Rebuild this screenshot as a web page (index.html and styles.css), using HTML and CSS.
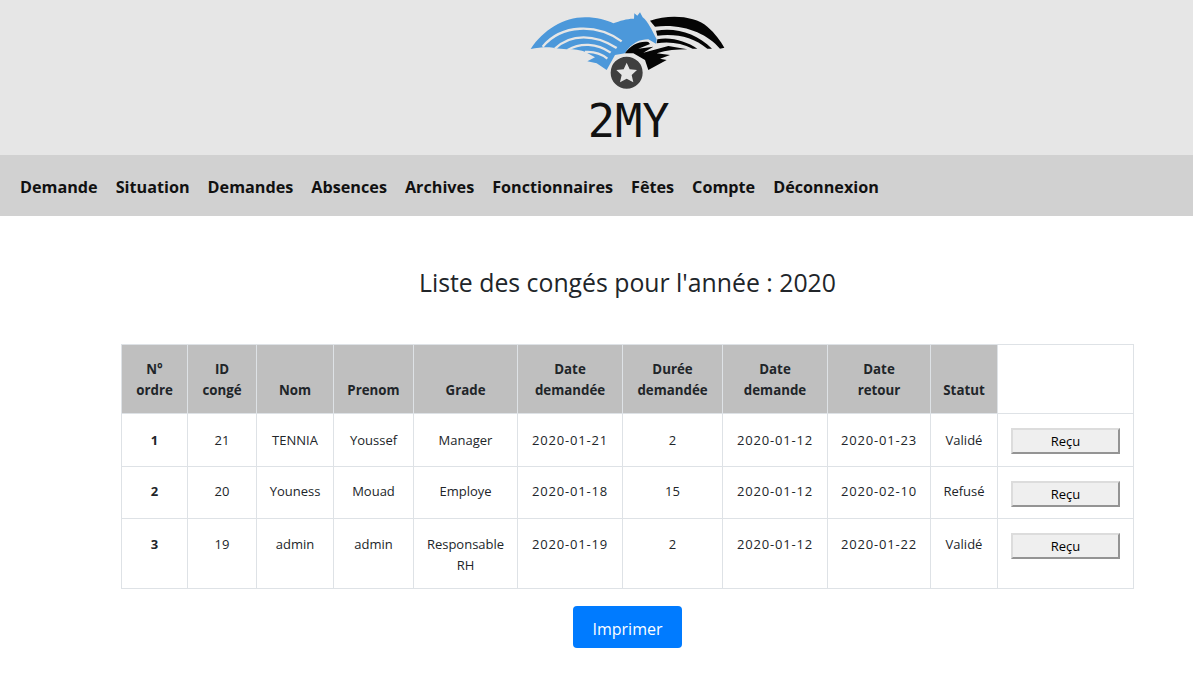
FILE: index.html
```html
<!DOCTYPE html>
<html lang="fr">
<head>
  <meta charset="UTF-8" />
  <meta name="viewport" content="width=device-width, initial-scale=1" />
  <title>Liste des congés</title>
  <link rel="stylesheet" href="styles.css">
</head>
<body>

  <header class="top">
    <svg class="logo" viewBox="0 0 750 450" width="250" height="150" role="img" aria-label="2MY">
      <!-- blue wing -->
      <path class="wing-blue" d="M92 147C130 90 190 52 255 52C290 52 320 60 340 70C360 62 385 55 402 56L403 40L412 47L420 37L428 52C445 65 455 90 470 118L468 131L445 118C420 118 395 128 375 160L345 165L320 210L290 190L262 184L285 172L255 155C230 148 215 148 200 148L165 145C150 140 120 142 92 147Z"/>
      <path class="cut" d="M128 140C185 72 290 70 365 124"/>
      <path class="cut" d="M165 146C212 100 285 102 350 144"/>
      <path class="cut" d="M203 150C240 128 290 128 332 158"/>
      <path class="cut" d="M255 156C280 154 305 162 322 176"/>
      <!-- black wing -->
      <path class="wing-black" d="M450 62C510 42 585 48 622 80C645 100 662 122 673 143L660 146C620 100 550 70 465 80Z"/>
      <path class="wing-black" d="M468 92C530 82 590 100 636 146L622 146C580 112 530 100 472 107Z"/>
      <path class="wing-black" d="M472 118C515 110 560 125 592 146L578 146C545 130 510 124 470 130Z"/>
      <path class="wing-black" d="M375 160C390 135 420 122 445 126L450 132L415 146L460 140L430 158L505 138L562 148C530 148 500 150 470 160L510 165L480 176L500 180L445 210L435 180L400 160Z"/>
      <!-- star badge -->
      <circle class="badge" cx="380" cy="218" r="51"/>
      <polygon class="star" points="380,188 389,208 411,210 395,225 400,247 380,236 360,247 365,225 349,210 371,208"/>
      <text class="logo-text" x="386" y="412">2MY</text>
    </svg>
  </header>

  <nav class="menu">
    <a href="#">Demande</a>
    <a href="#">Situation</a>
    <a href="#">Demandes</a>
    <a href="#">Absences</a>
    <a href="#">Archives</a>
    <a href="#">Fonctionnaires</a>
    <a href="#">Fêtes</a>
    <a href="#">Compte</a>
    <a href="#">Déconnexion</a>
  </nav>

  <main class="content">
    <h1>Liste des congés pour l'année : 2020</h1>

    <table class="conges">
      <colgroup>
        <col class="c-ordre"><col class="c-id"><col class="c-nom"><col class="c-prenom"><col class="c-grade">
        <col class="c-date1"><col class="c-duree"><col class="c-date2"><col class="c-date3"><col class="c-statut"><col class="c-action">
      </colgroup>
      <thead>
        <tr>
          <th>N°<br>ordre</th>
          <th>ID<br>congé</th>
          <th>Nom</th>
          <th>Prenom</th>
          <th>Grade</th>
          <th>Date<br>demandée</th>
          <th>Durée<br>demandée</th>
          <th>Date<br>demande</th>
          <th>Date<br>retour</th>
          <th>Statut</th>
          <td></td>
        </tr>
      </thead>
      <tbody>
        <tr class="r1">
          <td><b>1</b></td><td>21</td><td>TENNIA</td><td>Youssef</td><td>Manager</td>
          <td class="date">2020-01-21</td><td>2</td><td class="date">2020-01-12</td><td class="date">2020-01-23</td><td>Validé</td>
          <td class="action"><button class="recu">Reçu</button></td>
        </tr>
        <tr class="r2">
          <td><b>2</b></td><td>20</td><td>Youness</td><td>Mouad</td><td>Employe</td>
          <td class="date">2020-01-18</td><td>15</td><td class="date">2020-01-12</td><td class="date">2020-02-10</td><td>Refusé</td>
          <td class="action"><button class="recu">Reçu</button></td>
        </tr>
        <tr class="r3">
          <td><b>3</b></td><td>19</td><td>admin</td><td>admin</td><td>Responsable RH</td>
          <td class="date">2020-01-19</td><td>2</td><td class="date">2020-01-12</td><td class="date">2020-01-22</td><td>Validé</td>
          <td class="action"><button class="recu">Reçu</button></td>
        </tr>
      </tbody>
    </table>

    <div class="actions">
      <button class="imprimer">Imprimer</button>
    </div>
  </main>

</body>
</html>
```

FILE: styles.css
```css
* {
  box-sizing: border-box;
}
body {
  margin: 0;
  font-family: "Open Sans", "Noto Sans", Arial, sans-serif;
  color: #212529;
  background-color: #fff;
}
.top {
  display: flex;
  justify-content: center;
  height: 155px;
  padding-left: 57px;
  background-color: #e6e6e6;
}
.logo {
  display: block;
  flex: none;
}
.wing-blue {
  fill: #4c98da;
}
.wing-black {
  fill: #050505;
}
.cut {
  fill: none;
  stroke: #e6e6e6;
  stroke-width: 7;
}
.badge {
  fill: #3f3f3f;
  stroke: #e6e6e6;
  stroke-width: 6;
}
.star {
  fill: #e6e6e6;
}
.logo-text {
  font-family: "DejaVu Sans Mono", monospace;
  font-size: 136px;
  fill: #111;
  text-anchor: middle;
}
.menu {
  display: flex;
  align-items: center;
  gap: 18px;
  height: 61px;
  padding: 2px 0 0 20px;
  background-color: #d1d1d1;
}
.menu a {
  color: #111;
  font-size: 16.2px;
  font-weight: 700;
  text-decoration: none;
}
.content {
  padding: 49px 59px 0 121px;
}
h1 {
  margin: 0 0 45px;
  font-size: 24.8px;
  font-weight: 400;
  line-height: 34px;
  text-align: center;
}
.conges {
  width: 1012px;
  border-collapse: collapse;
  table-layout: fixed;
  font-size: 13px;
}
.conges th,
.conges td {
  padding: 15px 8px 10px;
  border: 1px solid #dee2e6;
  line-height: 21px;
  text-align: center;
  vertical-align: top;
}
.conges th {
  padding: 14px 0 12px;
  vertical-align: bottom;
  background-color: #bfbfbf;
  font-size: 13.3px;
  font-weight: 700;
}
.conges .date {
  padding-left: 0;
  padding-right: 0;
  letter-spacing: 0.8px;
}
.r1 td {
  padding-top: 16px;
}
.r2 td {
  padding-top: 14px;
}
.conges .action {
  padding-top: 14px;
}
.c-ordre { width: 66px; }
.c-id { width: 69px; }
.c-nom { width: 77px; }
.c-prenom { width: 80px; }
.c-grade { width: 104px; }
.c-date1 { width: 105px; }
.c-duree { width: 100px; }
.c-date2 { width: 105px; }
.c-date3 { width: 103px; }
.c-statut { width: 67px; }
.c-action { width: 136px; }
.r1 { height: 53px; }
.r2 { height: 52px; }
.r3 { height: 70px; }
.recu {
  display: block;
  width: 109px;
  height: 26px;
  margin: 0 auto;
  padding: 0;
  border: 2px solid;
  border-color: #dcdcdc #949494 #949494 #dcdcdc;
  background-color: #efefef;
  color: #000;
  font-family: inherit;
  font-size: 13px;
}
.actions {
  display: flex;
  justify-content: center;
  margin-top: 17px;
}
.imprimer {
  width: 109px;
  height: 42px;
  padding: 3px 0 0;
  border: 0;
  border-radius: 4px;
  background-color: #007bff;
  color: #fff;
  font-family: inherit;
  font-size: 16px;
}
```
